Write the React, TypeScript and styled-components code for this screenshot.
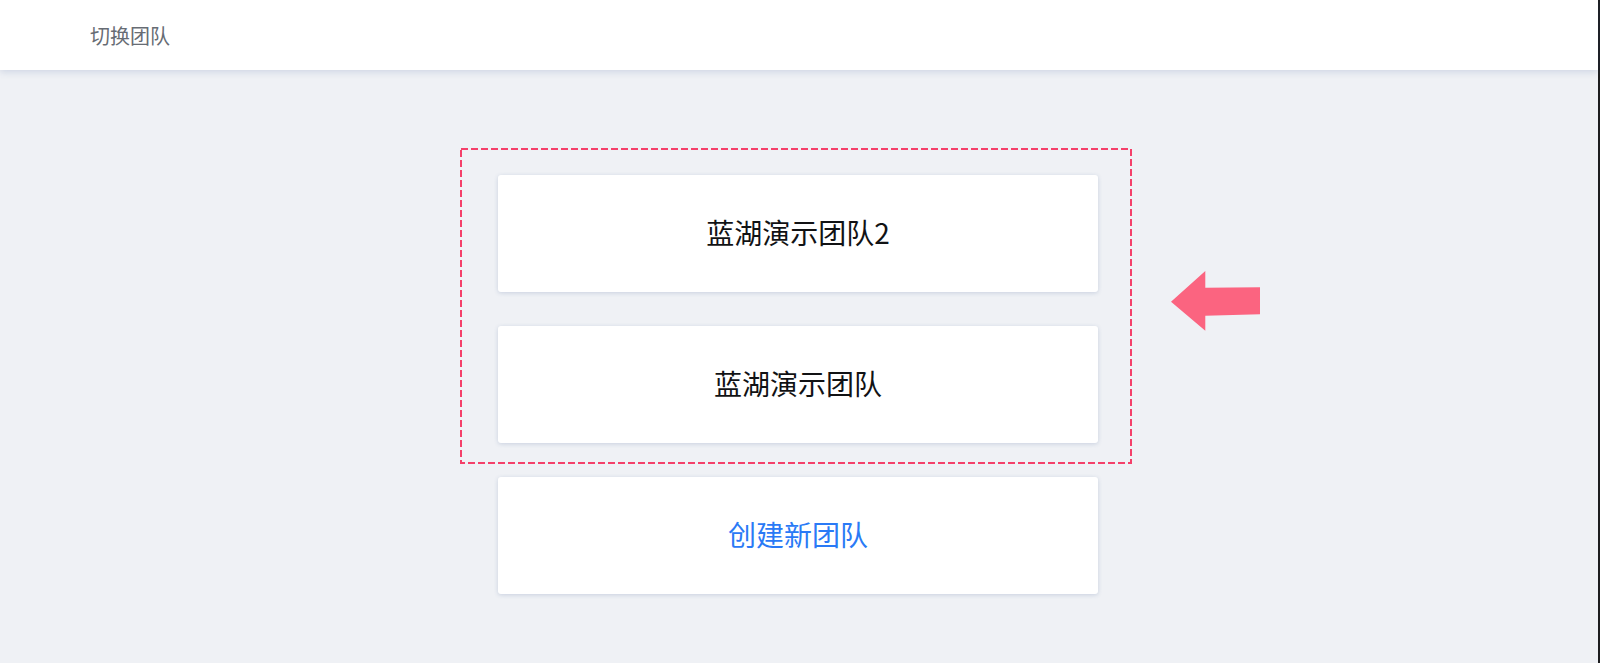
import React from "react";
import styled, { createGlobalStyle } from "styled-components";

const GlobalStyle = createGlobalStyle`
  html, body {
    margin: 0;
    padding: 0;
    height: 100%;
    overflow: hidden;
  }
  body {
    background: #eff1f5;
    font-family: "Noto Sans CJK SC", "Noto Sans", sans-serif;
  }
  #root { height: 100%; }
`;

const Page = styled.div`
  box-sizing: border-box;
  height: 100vh;
  display: flex;
  flex-direction: column;
  background: #eff1f5;
  border-right: 2px solid #1d1d1f;
`;

const Header = styled.header`
  flex: 0 0 70px;
  height: 70px;
  display: flex;
  align-items: center;
  padding-left: 90px;
  background: #ffffff;
  box-shadow: 0 2px 7px rgba(60, 90, 150, 0.18);
  position: relative;
  z-index: 1;
`;

const Title = styled.h1`
  margin: 0;
  font-size: 20px;
  font-weight: 400;
  color: #676c74;
`;

const Main = styled.main`
  flex: 1;
  display: flex;
  flex-direction: column;
  align-items: center;
  padding-top: 105px;
  padding-right: 2px;
  gap: 34px;
`;

const Group = styled.div`
  position: relative;
  display: flex;
  flex-direction: column;
  gap: 34px;
`;

const Card = styled.button<{ $accent?: boolean }>`
  box-sizing: border-box;
  width: 600px;
  height: 117px;
  display: flex;
  align-items: center;
  justify-content: center;
  border: none;
  border-radius: 3px;
  background: #ffffff;
  box-shadow: 0 1px 4px rgba(70, 95, 150, 0.22);
  font-family: "Noto Sans CJK SC", "Noto Sans", sans-serif;
  font-size: 28px;
  font-weight: 400;
  color: ${(p) => (p.$accent ? "#2a7af6" : "#111214")};
  cursor: pointer;
  padding: 0 0 4px;
`;

const DashedFrame = styled.svg`
  position: absolute;
  left: -38px;
  top: -27px;
  width: 672px;
  height: 316px;
  overflow: visible;
  pointer-events: none;
`;

const Arrow = styled.svg`
  position: absolute;
  left: 672px;
  top: 95px;
  width: 91px;
  height: 62px;
  pointer-events: none;
`;

export default function App() {
  return (
    <>
      <GlobalStyle />
      <Page>
        <Header>
          <Title>切换团队</Title>
        </Header>
        <Main>
          <Group>
            <Card>蓝湖演示团队2</Card>
            <Card>蓝湖演示团队</Card>
            <DashedFrame viewBox="0 0 672 316">
              <rect
                x="1"
                y="1"
                width="670"
                height="314"
                fill="none"
                stroke="#f4406a"
                strokeWidth="2"
                strokeDasharray="7 3"
              />
            </DashedFrame>
            <Arrow viewBox="0 0 91 62">
              <polygon
                points="1,31.7 35.3,1 35.3,17.7 90,17.2 90,44.3 35.3,45.7 35.3,60.7"
                fill="#fb6480"
              />
            </Arrow>
          </Group>
          <Card $accent>创建新团队</Card>
        </Main>
      </Page>
    </>
  );
}
